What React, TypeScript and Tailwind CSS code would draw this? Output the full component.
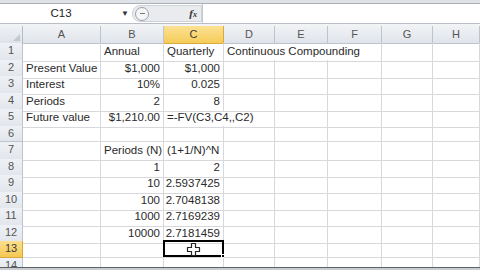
import React from 'react';

type Cell = { text?: string; right?: boolean; span?: 1 | 2 | 3 };

const gridCols = 'grid grid-cols-[23px_78px_63px_60px_51px_53px_54px_51px_1fr]';
const colLetters = ['A', 'B', 'C', 'D', 'E', 'F', 'G', 'H'];

// row contents, columns A..H (spans cover overflowed text)
const rows: Cell[][] = [
  [{}, { text: 'Annual' }, { text: 'Quarterly' }, { text: 'Continuous Compounding', span: 3 }, {}, {}],
  [{ text: 'Present Value' }, { text: '$1,000', right: true }, { text: '$1,000', right: true }, {}, {}, {}, {}, {}],
  [{ text: 'Interest' }, { text: '10%', right: true }, { text: '0.025', right: true }, {}, {}, {}, {}, {}],
  [{ text: 'Periods' }, { text: '2', right: true }, { text: '8', right: true }, {}, {}, {}, {}, {}],
  [{ text: 'Future value' }, { text: '$1,210.00', right: true }, { text: '=-FV(C3,C4,,C2)', span: 2 }, {}, {}, {}, {}],
  [{}, {}, {}, {}, {}, {}, {}, {}],
  [{}, { text: 'Periods (N)' }, { text: '(1+1/N)^N' }, {}, {}, {}, {}, {}],
  [{}, { text: '1', right: true }, { text: '2', right: true }, {}, {}, {}, {}, {}],
  [{}, { text: '10', right: true }, { text: '2.5937425', right: true }, {}, {}, {}, {}, {}],
  [{}, { text: '100', right: true }, { text: '2.7048138', right: true }, {}, {}, {}, {}, {}],
  [{}, { text: '1000', right: true }, { text: '2.7169239', right: true }, {}, {}, {}, {}, {}],
  [{}, { text: '10000', right: true }, { text: '2.7181459', right: true }, {}, {}, {}, {}, {}],
  [{}, {}, {}, {}, {}, {}, {}, {}],
  [{}, {}, {}, {}, {}, {}, {}, {}],
];

function CrossCursor() {
  return (
    <svg width="15" height="15" viewBox="0 0 15 15" className="absolute left-[21px] top-[0px]">
      <path
        d="M5.5 1.5h4v4h4v4h-4v4h-4v-4h-4v-4h4z"
        fill="#ffffff"
        stroke="#222"
        strokeWidth="1.2"
        strokeLinejoin="round"
      />
    </svg>
  );
}

function SheetRow({ n, cells }: { n: number; cells: Cell[] }) {
  const active = n === 13;
  return (
    <div className={`${gridCols} h-[16.5px] shrink-0`}>
      <div
        className={`flex items-start pt-[1px] leading-[13px] justify-center border-r border-b text-[11px] ${
          active
            ? 'bg-gradient-to-b from-[#fbe08c] to-[#f5c850] border-[#d8a83c] text-[#3a3a3a]'
            : 'bg-gradient-to-b from-[#eef1f5] to-[#e2e6ec] border-[#bcc4cf] text-[#555]'
        }`}
      >
        {n}
      </div>
      {cells.map((c, i) => {
        const span = c.span === 3 ? 'col-span-3' : c.span === 2 ? 'col-span-2' : '';
        const isSel = active && i === 2;
        return (
          <div
            key={i}
            className={`${span} relative flex items-end pb-[1px] border-r border-b border-[#d6d8dc] whitespace-nowrap text-[11.5px] text-[#2a2a2a] ${
              c.right ? 'justify-end pr-[3px]' : 'pl-[3px]'
            }`}
          >
            {c.text}
            {isSel && (
              <div className="absolute -left-[1px] -top-[1px] w-[61px] h-[17px] border-2 border-black">
                <div className="absolute -right-[3px] -bottom-[3px] w-[4px] h-[4px] bg-black border border-white" />
                <CrossCursor />
              </div>
            )}
          </div>
        );
      })}
    </div>
  );
}

export default function App() {
  return (
    <div className="w-[480px] h-[270px] overflow-hidden bg-white flex flex-col font-['Liberation_Sans',Arial,sans-serif]">
      {/* ribbon remnant */}
      <div className="h-[4px] shrink-0 bg-[#dfe2e6] border-b border-[#a9afb7]" />

      {/* formula bar */}
      <div className="h-[20px] shrink-0 flex items-stretch border-b border-[#b9bec6] bg-white">
        <div className="w-[118px] flex items-center justify-center text-[11.5px] text-[#222] pl-[4px]">C13</div>
        <div className="w-[14px] flex items-center justify-center text-[8px] text-[#333]">▼</div>
        <div className="w-[70px] my-[1px] flex items-center justify-between bg-[#e9ebee] rounded-l-[8px] border border-[#cfd3d8] pr-[4px]">
          <div className="ml-[2px] w-[14px] h-[14px] rounded-full border border-[#9aa0a8] bg-[#f4f5f7] flex items-center justify-center">
            <div className="w-[5px] h-[1px] bg-[#777]" />
          </div>
          <span className="font-['Liberation_Serif',serif] italic text-[11px] text-[#333] font-bold">
            f<span className="text-[8px]">x</span>
          </span>
        </div>
        <div className="flex-1 bg-white border-l border-[#c4c8ce]" />
      </div>

      <div className="h-[2px] shrink-0 bg-[#f2f3f5]" />

      {/* column headers */}
      <div className={`${gridCols} h-[17px] shrink-0`}>
        <div className="bg-gradient-to-b from-[#eef1f5] to-[#dfe3e9] border-r border-b border-[#b4bcc7] flex items-end justify-end p-[2px]">
          <div className="w-0 h-0 border-l-[7px] border-l-transparent border-b-[7px] border-b-[#c3c8cf]" />
        </div>
        {colLetters.map((l) => (
          <div
            key={l}
            className={`flex items-center justify-center border-r border-b text-[11px] ${
              l === 'C'
                ? 'bg-gradient-to-b from-[#fbe192] to-[#f6cc57] border-[#d9ab3f] text-[#3a3a3a]'
                : 'bg-gradient-to-b from-[#f0f2f5] to-[#e0e4ea] border-[#bcc4cf] text-[#555]'
            }`}
          >
            {l}
          </div>
        ))}
      </div>

      {/* cells */}
      <div className="flex-1 overflow-hidden flex flex-col">
        {rows.map((cells, i) => (
          <SheetRow key={i} n={i + 1} cells={cells} />
        ))}
      </div>

      <div className="h-[3px] shrink-0 bg-[#c9ccd1] border-t border-[#5d6166]" />
    </div>
  );
}
